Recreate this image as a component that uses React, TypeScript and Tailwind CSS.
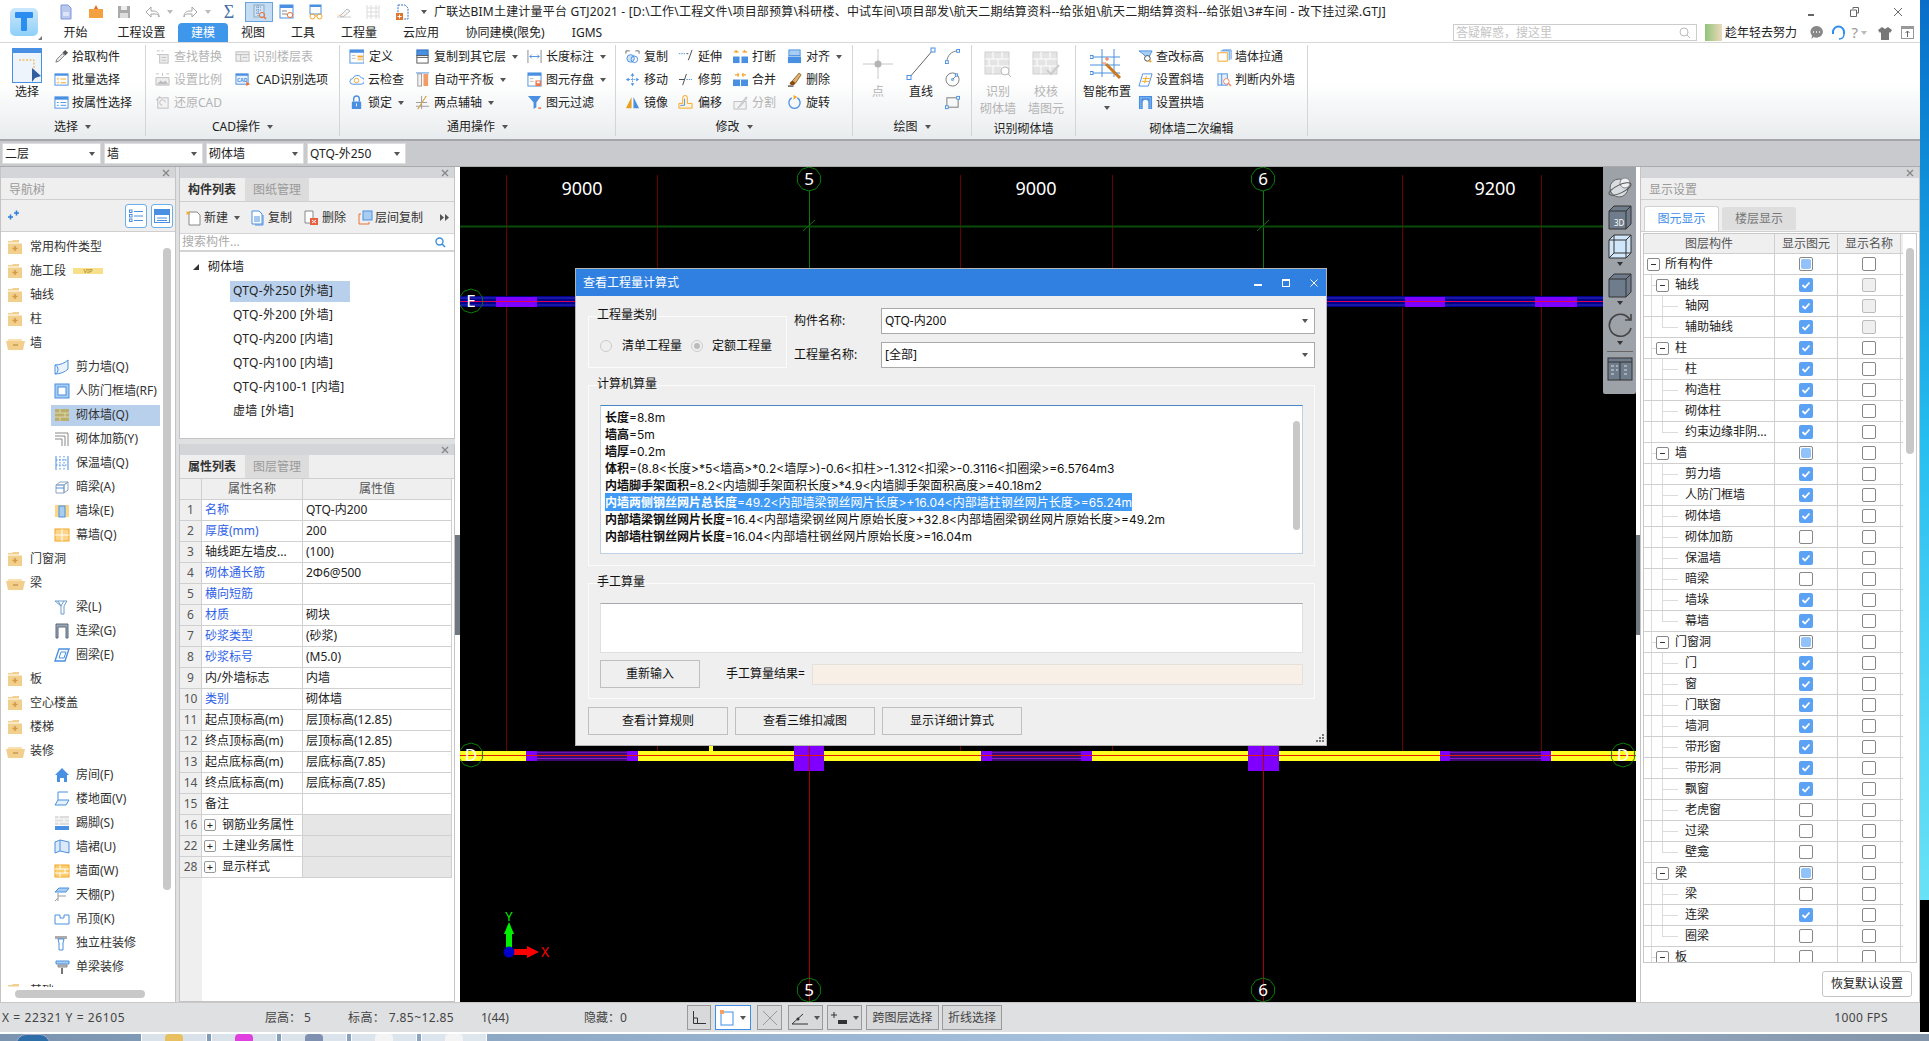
import React from "react";

const B = "#4a90e2", L = "#cfe3f8", O = "#f5a623", G = "#bdbdbd", D = "#666", K = "#444";

const icons: Record<string, React.ReactNode> = {
  pick: <><path d="M2 14l1-3 6-6 2 2-6 6z" fill="#eee" stroke="#777" /><path d="M9 4l3-3 3 3-3 3z" fill="#555" /></>,
  batch: <><rect x="1" y="2" width="14" height="12" fill="#fff" stroke={B} /><path d="M1 2h14v2H1z" fill={B} /><path d="M3 7l1 1 1-2M3 11l1 1 1-2M7 7.5h6M7 11.5h6" stroke={O} fill="none" /></>,
  prop: <><rect x="1" y="2" width="14" height="12" fill="#fff" stroke={B} /><path d="M1 2h14v3H1z" fill={B} /><path d="M3 8h2M7 8h6M3 11h2M7 11h6" stroke={B} /></>,
  find: <><path d="M2 2h3M7 2h2M2 6h3" stroke={G} /><rect x="5" y="6" width="9" height="9" fill="#eee" stroke={G} /><path d="M7 9h5M7 12h5" stroke={G} /></>,
  ftable: <><rect x="1" y="3" width="14" height="10" fill="#eee" stroke={G} /><path d="M1 6h14M6 6v7M8 9h5" stroke={G} /></>,
  scale: <><path d="M1 2h3M12 2h3M8 1v3" stroke={G} /><path d="M1 6h14v8H1z" fill="#eee" stroke={G} /><path d="M2 13l4-4 3 2 2-2 3 4z" fill={G} /></>,
  restore: <><rect x="3" y="3" width="11" height="11" fill="#f3f3f3" stroke={G} /><path d="M1 5h2M5 1v2M11 8a3 3 0 1 0-3 3" stroke={G} fill="none" /></>,
  cad: <><rect x="1" y="2" width="13" height="11" fill="#e6f0fb" stroke={B} /><path d="M1 2h13v2H1z" fill={B} /><text x="2" y="11" fontSize="5.5" fill={B} fontWeight="700">CAD</text><path d="M12 10l4 3-4 2z" fill="#f07030" /></>,
  def: <><rect x="1" y="1" width="15" height="14" fill="#fff" stroke={B} /><path d="M1 1h15v3H1z" fill={B} /><path d="M3 7h4M3 10h4" stroke={G} /><rect x="9" y="7" width="6" height="2" fill={O} /><rect x="9" y="10" width="6" height="2" fill="#f9c97a" /></>,
  cloud: <><path d="M4 13a3 3 0 0 1 0-6 5 5 0 0 1 9-1 3.5 3.5 0 0 1 0 7z" fill="#fff" stroke={B} /><circle cx="8" cy="9" r="2.4" fill="none" stroke={O} /></>,
  lock: <><path d="M5 7V4a3 3 0 0 1 6 0v3" fill="none" stroke={B} strokeWidth="1.5" /><rect x="3" y="7" width="10" height="8" rx="1" fill={B} /><rect x="7.5" y="9" width="1" height="3" fill="#fff" /></>,
  copyfl: <><rect x="2" y="1" width="12" height="6" fill={B} stroke="#2a6fb8" /><rect x="2" y="7" width="12" height="8" fill="#fff" stroke="#555" /><path d="M2 9h12" stroke="#555" /></>,
  align: <><path d="M1 1h14" stroke={B} /><rect x="3" y="2" width="4" height="13" fill="#f3f3f3" stroke="#999" /><rect x="9" y="2" width="5" height="13" fill="#f49a66" /></>,
  aux: <><path d="M1 12h14M1 8h12M7 1v14M12 1L3 15" stroke="#999" /><path d="M12 1L3 15" stroke={O} /></>,
  dim: <><path d="M1 1v14M15 1v14" stroke="#888" /><path d="M3 8h10M3 8l2-2M3 8l2 2M13 8l-2-2M13 8l-2 2" stroke={B} fill="none" /></>,
  save: <><rect x="1" y="1" width="14" height="14" fill="#fff" stroke={B} /><path d="M1 1h14v3H1z" fill={B} /><path d="M3 7h4M3 10h4" stroke={G} /><rect x="9" y="9" width="6" height="6" fill="#f07848" /><rect x="10.5" y="10" width="3" height="2" fill="#fff" /></>,
  filter: <><path d="M1 1h14L10 8v5l-3 2V8z" fill={B} /><path d="M12 14h3" stroke="#f07030" strokeWidth="1.5" /></>,
  copy: <><circle cx="6" cy="10" r="4" fill="#cfe3f8" stroke={B} /><path d="M1 2h4M1 2v3M11 2h4v3" stroke="#666" fill="none" /><circle cx="10" cy="11" r="3.5" fill="none" stroke={B} /></>,
  move: <><path d="M8 1l2 3H6zM8 15l2-3H6zM1 8l3-2v4zM15 8l-3-2v4z" fill={B} /><path d="M8 4v8M4 8h8" stroke={B} strokeDasharray="1.5 1" /></>,
  mirror: <><path d="M7 2v12H1z" fill="#e8a020" /><path d="M9 2v12h6z" fill={B} /></>,
  extend: <><path d="M1 5h7" stroke={B} strokeDasharray="1.5 1" /><path d="M9 5h2M11 12l4-11" stroke={K} /></>,
  trim: <><path d="M1 8h6" stroke={K} /><path d="M9 8h6" stroke={B} strokeDasharray="1.5 1" /><path d="M5 14l4-12" stroke={K} /></>,
  offset: <><path d="M1 14V9h4V3a2 2 0 0 1 5 0v6h5v5z" fill="#fff4dc" stroke={O} /><path d="M3 12v-1h4V4" fill="none" stroke={B} /></>,
  brk: <><rect x="0" y="8" width="7" height="7" fill={B} /><rect x="9" y="8" width="7" height="7" fill={B} /><path d="M3 1l1 3M1 3l5 0M12 1l1 3M10 3h5" stroke={O} strokeWidth="1.4" /></>,
  merge: <><rect x="0" y="8" width="16" height="7" fill={B} /><path d="M8 8v7" stroke="#fff" /><path d="M2 3h4M5 1l1 2-1 2M14 3h-4M11 1l-1 2 1 2" stroke={O} fill="none" strokeWidth="1.2" /></>,
  split: <><rect x="1" y="7" width="13" height="8" fill="#f3f3f3" stroke={G} /><path d="M5 14l3-4 6-8 1 1-6 8z" fill="#e2e2e2" stroke={G} /></>,
  alignr: <><rect x="2" y="1" width="12" height="6" fill="#a8cdf2" stroke={B} /><rect x="1" y="8" width="14" height="7" fill={B} /></>,
  del: <><path d="M1 15h6" stroke="#000" /><path d="M3 13c0-3 2-3 3-4l3 3c-1 2-3 3-6 1z" fill="#8a4a12" /><path d="M6 9l7-8 2 2-6 9z" fill="#e0b070" stroke="#8a6a30" /></>,
  rotate: <><path d="M5 3a6 6 0 1 0 6 0" fill="none" stroke={B} strokeWidth="1.4" /><path d="M7 0l4 2-4 3z" fill={O} /></>,
  arc: <><path d="M2 14C2 7 7 2 14 2" fill="none" stroke="#777" /><rect x="0.5" y="12.5" width="3" height="3" fill="#fff" stroke={B} /><rect x="12.5" y="0.5" width="3" height="3" fill="#fff" stroke={B} /></>,
  circ: <><circle cx="8" cy="8" r="7" fill="none" stroke="#777" /><circle cx="8" cy="8" r="1.2" fill="#fff" stroke={B} /><path d="M8 8l4-4" stroke="#777" /><rect x="11" y="2" width="2.4" height="2.4" fill="#fff" stroke={B} /></>,
  rect: <><rect x="2" y="3" width="12" height="10" fill="none" stroke="#777" /><rect x="0.5" y="11.5" width="3" height="3" fill="#fff" stroke={B} /><rect x="12.5" y="1.5" width="3" height="3" fill="#fff" stroke={B} /></>,
  height: <><path d="M1 2h14l-3 6H8L5 5z" fill="#a8cdf2" stroke={B} /><circle cx="10" cy="10" r="3" fill="#fff" stroke={K} /><path d="M12 12l2 2" stroke={O} strokeWidth="2" /></>,
  slant: <><path d="M5 2h10l-4 13H1z" fill="#fff" stroke={B} /><path d="M4 10h8M5 7h8M7 12l2-8" stroke={O} /></>,
  arch: <><path d="M1 15V1h14v14h-4V8a3 3 0 0 0-6 0v7z" fill={B} /><path d="M3 3v12M13 3v12M3 3h10" stroke="#cfe3f8" strokeDasharray="1 1" /></>,
  through: <><rect x="1" y="4" width="10" height="9" fill="#fff" stroke={O} /><path d="M4 2h9v10M6 1h9v10" fill="none" stroke={B} /></>,
  inout: <><rect x="1" y="2" width="10" height="12" fill="#e6f0fb" stroke={B} /><path d="M5 2v12" stroke={B} /><circle cx="10" cy="10" r="3" fill="#fff" stroke="#f08060" /><path d="M12 12l3 3" stroke="#f08060" strokeWidth="1.5" /></>,
  doc: <><path d="M3 1h7l3 3v11H3z" fill="#b9c9ee" stroke="#7f97d8" /><path d="M5 9h6M5 11h6" stroke="#fff" /></>,
  folder: <><path d="M1 5h14v9H1z" fill="#f2a040" /><path d="M6 5l2-4 2 4z" fill="#e8681c" /></>,
  disk: <><rect x="2" y="2" width="12" height="12" fill="#aaa" /><rect x="5" y="2" width="6" height="4" fill="#eee" /><rect x="4" y="9" width="8" height="5" fill="#ddd" /></>,
  undo: <path d="M6 3L1 8l5 5v-3h4c2 0 4 1 4 3 0-4-2-6-6-6H6z" fill="#fff" stroke="#a5a5a5" />,
  redo: <path d="M10 3l5 5-5 5v-3H6c-2 0-4 1-4 3 0-4 2-6 6-6h2z" fill="#fff" stroke="#a5a5a5" />,
  q1: <><rect x="3" y="1" width="10" height="12" fill="#cfe3f8" stroke="#8ab" /><path d="M5 3h6M5 6h6M5 9h3M7 1v11" stroke="#6a8ab0" strokeDasharray="1 1" /><circle cx="11" cy="11" r="2.6" fill="none" stroke="#f07030" /><path d="M13 13l2 2" stroke="#f07030" strokeWidth="1.5" /></>,
  q2: <><rect x="1" y="1" width="13" height="13" fill="#fff" stroke={B} /><path d="M1 1h13v3H1z" fill={B} /><path d="M3 7h5M3 10h5" stroke="#888" /><circle cx="11" cy="11" r="2.6" fill="#fff" stroke="#f07030" /></>,
  q3: <><rect x="2" y="1" width="11" height="9" fill="#fff" stroke={B} /><path d="M2 1h11v2H2z" fill={B} /><circle cx="4.5" cy="12.5" r="2.5" fill="none" stroke={O} /><circle cx="11.5" cy="12.5" r="2.5" fill="none" stroke={O} /><path d="M7 12h2" stroke={O} /></>,
  q4: <><path d="M1 13h14" stroke="#ccc" /><path d="M4 12l7-7 3 2-7 6z" fill="#f5f5f5" stroke={G} /><path d="M2 12l2-2 2 2z" fill="#f8c8a0" /></>,
  q5: <><path d="M2 1v14M6 1v14M11 1v14M14 1v14M2 4h12M2 8h12M2 12h12" stroke="#dcdcdc" /></>,
  q6: <><path d="M3 1h7l3 3v11H3z" fill="#fff" stroke="#3574c0" strokeDasharray="2 1" /><rect x="1" y="9" width="7" height="7" fill="#e0752c" /><path d="M4.5 10.5v4M2.5 12.5h4" stroke="#fff" /></>,
  tnew: <><path d="M3 2h8l3 3v10H3z" fill="#fff" stroke="#888" /><path d="M0 1l2 1 2-1-1 2 1 2-2-1-2 1 1-2z" fill={O} /></>,
  tcopy: <><path d="M2 1h7l3 3v10H2z" fill="#fff" stroke={B} /><path d="M4 7h6M4 9h6M4 11h6" stroke={B} /><path d="M13 5v10H5" stroke={B} fill="none" /></>,
  tdel: <><path d="M2 1h8v12H2z" fill="#fff" stroke="#888" /><rect x="7" y="8" width="8" height="7" fill="#e86040" /><path d="M9 10l4 3M13 10l-4 3" stroke="#fff" /></>,
  tfloor: <><rect x="6" y="1" width="9" height="9" fill="#a8cdf2" stroke={B} /><path d="M4 4H2v10h10v-2" fill="none" stroke="#e8732c" /></>,
  wallq: <><path d="M1 6c5 0 10-2 13-5v9c-3 3-8 5-13 5z" fill="#eaf3fc" stroke={B} /><path d="M1 6c4 1 4 8 0 9" stroke={B} fill="none" /></>,
  door: <><rect x="1" y="1" width="14" height="14" fill="#a8cdf2" stroke={B} /><rect x="4" y="4" width="8" height="8" fill="#fff" stroke={B} /></>,
  brick: <><rect x="1" y="2" width="14" height="12" fill="#b9ae6c" /><path d="M1 6h14M1 10h14M6 2v4M11 6v4M6 10v4" stroke="#dfd9ad" /></>,
  rebar: <><path d="M1 2h13v13M1 5h10v10M1 8h7v7" fill="none" stroke="#888" /></>,
  insul: <><path d="M2 1v14M14 1v14" stroke={B} /><path d="M6 1v14M10 1v14M2 5h12M2 10h12" stroke={B} strokeDasharray="1.5 1.5" /></>,
  hidden: <><path d="M2 6l4-3h8l-4 3zM2 6h8v8H2zM10 6l4-3v8l-4 3z" fill="#fff" stroke="#8aa4c4" /><path d="M2 9h8" stroke={B} /></>,
  pier: <><rect x="1" y="2" width="14" height="12" fill="#fbd784" /><rect x="5" y="3" width="6" height="11" fill="#a8cdf2" stroke={B} /></>,
  curtain: <><rect x="1" y="2" width="14" height="12" fill="#fcd58a" stroke={O} /><path d="M8 2v12M1 8h14" stroke="#fff" /></>,
  beam: <><path d="M1 2h12l-3 5v8H7V7z" fill="#fff" stroke="#6a9ccc" /><path d="M4 2l3 5M10 2L7 7" stroke="#6a9ccc" /></>,
  cbeam: <><path d="M2 1h12v14h-2V4H4v11H2z" fill="#9aa6b4" stroke="#5a6a7a" /></>,
  rbeam: <><path d="M5 2h10l-4 12H1z" fill="#fff" stroke={B} strokeWidth="1.4" /><path d="M7 5h5l-2 6H5z" fill="none" stroke={B} /></>,
  room: <><path d="M1 8l7-7 7 7h-2v7h-3v-4H6v4H3V8z" fill={B} /></>,
  floor: <><path d="M4 1v8M4 1h10M1 14l3-5h11l-3 5z" fill="#e6f0fb" stroke={B} /></>,
  skirt: <><rect x="1" y="1" width="14" height="9" fill="#ddd" /><path d="M1 4h14M1 7h14M5 1v3M10 4v3M5 7v3" stroke="#fff" /><rect x="1" y="11" width="14" height="4" fill={B} /></>,
  dado: <><path d="M1 3l5-2 9 2v11l-9-2-5 2z" fill="#dbe9f8" stroke={B} /><path d="M6 1v11" stroke={B} /></>,
  wface: <><rect x="1" y="2" width="14" height="12" fill="#fbcf70" stroke={O} /><path d="M1 6h14M1 10h14M6 2v4M11 6v4M6 10v4" stroke="#fff" /></>,
  ceil: <><path d="M5 1h10l-3 4H1z" fill="#a8cdf2" stroke={B} /><path d="M4 6v8M4 9h8M1 14l3-3" stroke="#999" fill="none" /></>,
  susp: <><path d="M1 4h5v3h4V4h5v9H1z" fill="#fff" stroke={B} /></>,
  col: <><path d="M1 1h12v3H1z" fill="#aaa" /><path d="M4 4l1 4v7h4V8l1-4z" fill="#fff" stroke={B} /></>,
  sbeam: <><path d="M2 2h13v3H2z" fill="#a8cdf2" stroke={B} /><path d="M4 6h9v2H4z" fill="#ccc" stroke="#888" /><path d="M8 9v6" stroke="#777" strokeWidth="2" /></>,
};

const Ic = ({ n, s = 16 }: { n: string; s?: number }) => (
  <svg width={s} height={s} viewBox="0 0 16 16" className="shrink-0">{icons[n]}</svg>
);

const Arrow = ({ c = "border-t-[#555]", ml = "ml-[6px]" }: { c?: string; ml?: string }) => (
  <span className={`inline-block w-0 h-0 border-x-[3px] border-x-transparent border-t-[4px] ${c} ${ml}`} />
);

const Close = () => (
  <svg width="8" height="8" viewBox="0 0 8 8"><path d="M1 1l6 6M7 1L1 7" stroke="#888" strokeWidth="1.4" /></svg>
);

const Item = ({ i, t, iw = "w-[19px]", off, arrow }: { i: string; t: string; iw?: string; off?: boolean; arrow?: boolean }) => (
  <div className={`flex items-center h-[23px] whitespace-nowrap ${off ? "text-[#b4b4b4]" : ""}`}>
    <span className={`${iw} shrink-0 flex`}><Ic n={i} s={15} /></span>
    <span>{t}</span>
    {arrow && <Arrow />}
  </div>
);

const GroupLabel = ({ t, arrow = true }: { t: string; arrow?: boolean }) => (
  <div className={`h-[19px] flex items-center justify-center ${arrow ? "" : "pt-[4px]"}`}>{t}{arrow && <Arrow ml="ml-[7px]" />}</div>
);

const Section = ({ w, label, arrow, children }: { w: string; label: string; arrow?: boolean; children: React.ReactNode }) => (
  <div className={`${w} h-[91px] flex flex-col shrink-0 border-r border-[#d3d6d9]`}>
    <div className="h-[72px] flex">{children}</div>
    <GroupLabel t={label} arrow={arrow} />
  </div>
);

const PANEL_RULES = [506, 657, 960, 1112, 1402, 1541];

const Ribbon = () => (
  <div className="h-[97px] pt-[2px] flex bg-gradient-to-b from-white from-40% to-[#e9ecee] border-t border-[#d8d8d8] text-[#222]">
    <Section w="w-[146px]" label="选择">
      <div className="w-[54px] flex flex-col items-center">
        <div className="h-[38px] pt-[3px]">
          <svg width="30" height="35" viewBox="0 0 30 35">
            <rect x="0.5" y="0.5" width="29" height="34" fill="#eef4fb" stroke="#4a90e2" />
            <rect x="0" y="0" width="30" height="5" fill="#4a90e2" />
            <path d="M7 12h15v16" stroke="#f5a623" strokeDasharray="2 1.5" fill="none" />
            <path d="M20 20l9 8-6 2-3 4z" fill="#2f5f9f" />
          </svg>
        </div>
        <div className="leading-[17px]">选择</div>
      </div>
      <div>
        <Item i="pick" t="拾取构件" iw="w-[18px]" />
        <Item i="batch" t="批量选择" iw="w-[18px]" />
        <Item i="prop" t="按属性选择" iw="w-[18px]" />
      </div>
    </Section>
    <Section w="w-[194px]" label="CAD操作">
      <div className="w-[89px] pl-[9px]">
        <Item i="find" t="查找替换" off />
        <Item i="scale" t="设置比例" off />
        <Item i="restore" t="还原CAD" off />
      </div>
      <div>
        <Item i="ftable" t="识别楼层表" iw="w-[18px]" off />
        <Item i="cad" t="CAD识别选项" iw="w-[21px]" />
      </div>
    </Section>
    <Section w="w-[276px]" label="通用操作">
      <div className="w-[75px] pl-[9px]">
        <Item i="def" t="定义" iw="w-[20px]" />
        <Item i="cloud" t="云检查" />
        <Item i="lock" t="锁定" arrow />
      </div>
      <div className="w-[112px]">
        <Item i="copyfl" t="复制到其它层" arrow />
        <Item i="align" t="自动平齐板" arrow />
        <Item i="aux" t="两点辅轴" arrow />
      </div>
      <div>
        <Item i="dim" t="长度标注" arrow />
        <Item i="save" t="图元存盘" arrow />
        <Item i="filter" t="图元过滤" />
      </div>
    </Section>
    <Section w="w-[237px]" label="修改">
      <div className="w-[62px] pl-[9px]">
        <Item i="copy" t="复制" />
        <Item i="move" t="移动" />
        <Item i="mirror" t="镜像" />
      </div>
      <div className="w-[55px]">
        <Item i="extend" t="延伸" iw="w-[20px]" />
        <Item i="trim" t="修剪" iw="w-[20px]" />
        <Item i="offset" t="偏移" iw="w-[20px]" />
      </div>
      <div className="w-[54px]">
        <Item i="brk" t="打断" />
        <Item i="merge" t="合并" />
        <Item i="split" t="分割" off />
      </div>
      <div>
        <Item i="alignr" t="对齐" arrow />
        <Item i="del" t="删除" />
        <Item i="rotate" t="旋转" />
      </div>
    </Section>
    <Section w="w-[119px]" label="绘图">
      <div className="w-[50px] flex flex-col items-center text-[#b4b4b4]">
        <div className="h-[38px] pt-[2px]">
          <svg width="30" height="34" viewBox="0 0 30 34"><path d="M0 17h30M15 2v30" stroke="#c8c8c8" /><circle cx="15" cy="17" r="3.5" fill="#b4b4b4" /></svg>
        </div>
        <div className="leading-[17px]">点</div>
      </div>
      <div className="w-[36px] flex flex-col items-center">
        <div className="h-[38px] pt-[2px]">
          <svg width="30" height="34" viewBox="0 0 30 34"><path d="M3 31L27 3" stroke="#666" /><rect x="1" y="28.5" width="4" height="4" fill="#fff" stroke="#4a90e2" /><rect x="25" y="1" width="4" height="4" fill="#fff" stroke="#4a90e2" /></svg>
        </div>
        <div className="leading-[17px]">直线</div>
      </div>
      <div className="ml-[6px]">
        <Item i="arc" t="" />
        <Item i="circ" t="" />
        <Item i="rect" t="" />
      </div>
    </Section>
    <Section w="w-[104px]" label="识别砌体墙" arrow={false}>
      <div className="w-[2px]" />
      <div className="w-[48px] flex flex-col items-center text-[#b4b4b4]">
        <div className="h-[38px] pt-[6px]">
          <svg width="28" height="28" viewBox="0 0 28 28"><rect x="1" y="1" width="24" height="22" fill="#e4e4e4" stroke="#cfcfcf" /><path d="M1 8h24M1 15h24M9 1v7M18 1v7M5 8v7M14 8v7M9 15v8M18 15v8" stroke="#fff" /><circle cx="21" cy="20" r="4" fill="#fff" stroke="#bbb" /><path d="M24 23l3 3" stroke="#bbb" /></svg>
        </div>
        <div className="leading-[17px] text-center">识别<br />砌体墙</div>
      </div>
      <div className="w-[48px] flex flex-col items-center text-[#b4b4b4]">
        <div className="h-[38px] pt-[6px]">
          <svg width="28" height="28" viewBox="0 0 28 28"><rect x="1" y="1" width="24" height="22" fill="#e4e4e4" stroke="#cfcfcf" /><path d="M1 8h24M1 15h24M9 1v7M18 1v7M5 8v7M14 8v7M9 15v8M18 15v8" stroke="#fff" /><path d="M15 19l4 4 8-9" stroke="#ccc" strokeWidth="2" fill="none" /></svg>
        </div>
        <div className="leading-[17px] text-center">校核<br />墙图元</div>
      </div>
    </Section>
    <Section w="w-[232px]" label="砌体墙二次编辑" arrow={false}>
      <div className="w-[6px]" />
      <div className="w-[50px] flex flex-col items-center">
        <div className="h-[38px] pt-[4px]">
          <svg width="34" height="32" viewBox="0 0 34 32">
            <path d="M12 0v28M24 0v28M0 8h30M0 16h30M0 24h30" stroke="#4a90e2" />
            <rect x="0" y="6.5" width="3" height="3" fill="#fff" stroke="#4a90e2" /><rect x="0" y="22.5" width="3" height="3" fill="#fff" stroke="#4a90e2" />
            <path d="M16 15l14 14" stroke="#c87a20" strokeWidth="3" /><path d="M17 8v4M15 10h4M12 14h4" stroke="#f07030" />
          </svg>
        </div>
        <div className="leading-[17px]">智能布置</div>
        <Arrow ml="mt-[6px]" />
      </div>
      <div className="w-[85px] pl-[6px]">
        <Item i="height" t="查改标高" iw="w-[18px]" />
        <Item i="slant" t="设置斜墙" iw="w-[18px]" />
        <Item i="arch" t="设置拱墙" iw="w-[18px]" />
      </div>
      <div>
        <Item i="through" t="墙体拉通" iw="w-[18px]" />
        <Item i="inout" t="判断内外墙" iw="w-[18px]" />
      </div>
    </Section>
    <div className="flex-1" />
  </div>
);

const Header = () => (
  <div className="h-[42px] flex bg-white">
    <div className="w-[46px] shrink-0 relative pl-[10px] pt-[8px]">
      <div className="w-[28px] h-[28px] rounded-[5px] bg-gradient-to-b from-[#cbe7fb] to-[#8fd0f8] flex justify-center">
        <svg width="22" height="26" viewBox="0 0 22 26"><path d="M3 5h16v4h-6v13h-4V9H3z" fill="#2c8df0" strokeLinejoin="round" stroke="#2c8df0" strokeWidth="2" /></svg>
      </div>
      <span className="absolute left-[38px] top-[36px] w-0 h-0 border-l-[4px] border-l-transparent border-b-[4px] border-b-[#777]" />
    </div>
    <div className="flex-1 flex flex-col">
      <div className="h-[23px] flex items-center">
        <span className="ml-[12px]"><Ic n="doc" /></span>
        <span className="ml-[14px]"><Ic n="folder" /></span>
        <span className="ml-[12px]"><Ic n="disk" /></span>
        <span className="ml-[13px]"><Ic n="undo" /></span>
        <Arrow c="border-t-[#bbb]" />
        <span className="ml-[9px]"><Ic n="redo" /></span>
        <Arrow c="border-t-[#bbb]" ml="ml-[7px]" />
        <span className="ml-[10px] w-[16px] text-center text-[18px] leading-[20px] text-[#4a6fa5] font-['Liberation_Serif',serif]">Σ</span>
        <span className="ml-[8px] w-[28px] h-[20px] flex items-center justify-center bg-[#c4dcf4] border border-[#6aa4dc]"><Ic n="q1" /></span>
        <span className="ml-[6px]"><Ic n="q2" /></span>
        <span className="ml-[13px]"><Ic n="q3" /></span>
        <span className="ml-[12px]"><Ic n="q4" /></span>
        <span className="ml-[13px]"><Ic n="q5" /></span>
        <span className="ml-[14px]"><Ic n="q6" /></span>
        <Arrow ml="ml-[10px]" />
        <span className="ml-[7px] whitespace-nowrap tracking-[0.2px]">广联达BIM土建计量平台 GTJ2021 - [D:\工作\工程文件\项目部预算\科研楼、中试车间\项目部发\航天二期结算资料--给张姐\航天二期结算资料--给张姐\3#车间 - 改下挂过梁.GTJ]</span>
        <div className="ml-auto flex items-center pr-[17px]">
          <span className="w-[6px] h-[2px] bg-[#666] mt-[6px]" />
          <svg className="ml-[36px]" width="9" height="10" viewBox="0 0 9 10"><path d="M3 2V.5h5.5V6H7M.5 3h6v6.500h-6z" fill="none" stroke="#666" /></svg>
          <svg className="ml-[34px]" width="10" height="10" viewBox="0 0 10 10"><path d="M1 1l8 8M9 1L1 9" stroke="#666" /></svg>
        </div>
      </div>
      <div className="h-[19px] flex items-center text-center">
        <div className="w-[59px]">开始</div>
        <div className="w-[73px]">工程设置</div>
        <div className="w-[50px] h-[19px] leading-[19px] bg-[#3f97eb] text-white rounded-t-[4px]">建模</div>
        <div className="w-[50px]">视图</div>
        <div className="w-[50px]">工具</div>
        <div className="w-[62px]">工程量</div>
        <div className="w-[62px]">云应用</div>
        <div className="w-[106px]">协同建模(限免)</div>
        <div className="w-[58px]">IGMS</div>
        <div className="ml-auto w-[467px] flex items-center pr-[6px]">
          <div className="w-[244px] h-[17px] border border-[#ccc] flex items-center justify-between px-[2px] text-[#c4c4c4]">
            <span>答疑解惑，搜这里</span>
            <svg width="12" height="12" viewBox="0 0 12 12" className="mr-[3px]"><circle cx="5" cy="5" r="4" fill="none" stroke="#bbb" /><path d="M8 8l3 3" stroke="#bbb" /></svg>
          </div>
          <div className="ml-[8px] w-[17px] h-[17px] bg-gradient-to-r from-[#8fc47a] to-[#ecd9bb]" />
          <span className="ml-[3px] whitespace-nowrap">趁年轻去努力</span>
          <span className="ml-auto flex items-center gap-[5px]">
            <svg width="15" height="15" viewBox="0 0 15 15"><path d="M7.500 1a6.500 5.800 0 1 1-3 11l-2 2 .5-3.500a6.500 5.800 0 0 1 4.500-9.500z" fill="#888" /><path d="M4 7h1M7 7h1M10 7h1" stroke="#fff" strokeWidth="1.4" /></svg>
            <svg width="15" height="16" viewBox="0 0 15 16" className="ml-[2px]"><path d="M2 9V7a5.500 5.500 0 0 1 11 0v2" fill="none" stroke="#2f8df0" strokeWidth="2" /><path d="M13 9c0 3-2 5-5 5" fill="none" stroke="#2f8df0" strokeWidth="1.4" /></svg>
            <span className="text-[15px] leading-[15px] text-[#999]">?</span>
            <Arrow c="border-t-[#bbb]" ml="ml-[-2px]" />
            <svg width="14" height="14" viewBox="0 0 14 14" className="ml-[6px]"><path d="M4 1L0 4l2 3 1-1v8h8V6l1 1 2-3-4-3-3 2z" fill="#777" /></svg>
            <svg width="13" height="13" viewBox="0 0 13 13" className="ml-[4px]"><rect x=".5" y=".5" width="12" height="12" fill="#fff" stroke="#999" /><path d="M0 0h13v3H0z" fill="#999" /><path d="M6.500 5v6M4.500 7l2-2 2 2" fill="none" stroke="#666" /></svg>
          </span>
        </div>
      </div>
    </div>
  </div>
);

const Sel = ({ w, t }: { w: string; t: string }) => (
  <div className={`${w} h-[21px] bg-white border border-[#ddd] flex items-center justify-between pl-[2px] pr-[5px]`}>
    <span>{t}</span><Arrow />
  </div>
);

const Folder = ({ open }: { open?: boolean }) => (
  <svg width="20" height="16" viewBox="0 0 20 16" className="shrink-0">
    {open ? (
      <><path d="M2 4h14v4H2z" fill="#f8e0b0" /><path d="M0 6h19l-2 9H2z" fill="#f3cf8d" /><path d="M7 10h5" stroke="#c89a50" strokeWidth="1.5" /></>
    ) : (
      <><path d="M2 2h4l1-1h6v3h3v11H2z" fill="#f3cf8d" /><path d="M2 4h14" stroke="#fff" /><path d="M9 7v5M6.500 9.500h5" stroke="#cf9a45" strokeWidth="1.5" /></>
    )}
  </svg>
);

const NAV: [number, string, string?][] = [
  [0, "常用构件类型"], [0, "施工段", "vip"], [0, "轴线"], [0, "柱"], [2, "墙"],
  [1, "剪力墙(Q)", "wallq"], [1, "人防门框墙(RF)", "door"], [1, "砌体墙(Q)", "brick"], [1, "砌体加筋(Y)", "rebar"], [1, "保温墙(Q)", "insul"], [1, "暗梁(A)", "hidden"], [1, "墙垛(E)", "pier"], [1, "幕墙(Q)", "curtain"],
  [0, "门窗洞"], [2, "梁"], [1, "梁(L)", "beam"], [1, "连梁(G)", "cbeam"], [1, "圈梁(E)", "rbeam"],
  [0, "板"], [0, "空心楼盖"], [0, "楼梯"], [2, "装修"],
  [1, "房间(F)", "room"], [1, "楼地面(V)", "floor"], [1, "踢脚(S)", "skirt"], [1, "墙裙(U)", "dado"], [1, "墙面(W)", "wface"], [1, "天棚(P)", "ceil"], [1, "吊顶(K)", "susp"], [1, "独立柱装修", "col"], [1, "单梁装修", "sbeam"], [0, "基础"],
];

const Band = () => (
  <div className="h-[11px] shrink-0 bg-[#d3d5d8] flex items-center justify-end pr-[5px]"><Close /></div>
);

const LeftPanel = () => (
  <div className="w-[176px] shrink-0 flex flex-col bg-white border-x border-[#c4c4c4] relative">
    <Band />
    <div className="h-[22px] shrink-0 bg-[#efefef] border-b border-[#cfcfcf] flex items-center pl-[8px] pt-[2px] text-[#9a9a9a]">导航树</div>
    <div className="h-[32px] shrink-0 bg-[#efefef] border-b border-[#cfcfcf] flex items-center pl-[6px] pr-[2px] justify-between">
      <svg width="13" height="11" viewBox="0 0 13 11"><path d="M1 7h5M3.500 4.500v5M7 3h5M9.500 .5v5" stroke="#2f7fe0" strokeWidth="1.6" /></svg>
      <div className="flex gap-[4px]">
        <div className="w-[22px] h-[24px] bg-white border border-[#6aaeea] rounded-[3px] flex items-center justify-center">
          <svg width="14" height="14" viewBox="0 0 14 14"><path d="M5 2.500h9M5 7h9M5 11.500h9" stroke="#4a90e2" /><rect x=".5" y="1" width="2.500" height="2.500" fill="none" stroke="#4a90e2" /><rect x=".5" y="5.500" width="2.500" height="2.500" fill="none" stroke="#4a90e2" /><rect x=".5" y="10" width="2.500" height="2.500" fill="none" stroke="#4a90e2" /></svg>
        </div>
        <div className="w-[22px] h-[24px] bg-white border border-[#6aaeea] rounded-[3px] flex items-center justify-center">
          <svg width="16" height="14" viewBox="0 0 16 14"><rect x=".5" y=".5" width="15" height="13" fill="#fff" stroke="#4a90e2" /><rect x="1" y="1" width="14" height="5" fill="#4a90e2" /><path d="M3 9h10M3 11.500h10" stroke="#4a90e2" /></svg>
        </div>
      </div>
    </div>
    <div className="h-[755px] overflow-hidden pt-[3px] text-[#333]">
      {NAV.map(([k, t, e]) =>
        k === 1 ? (
          <div key={t} className="h-[24px] flex items-center pl-[50px]">
            <div className={`w-[109px] h-[21px] flex items-center pl-[3px] whitespace-nowrap ${t === "砌体墙(Q)" ? "bg-[#b8d0ec]" : ""}`}>
              <span className="w-[22px] shrink-0"><Ic n={e as string} /></span>{t}
            </div>
          </div>
        ) : (
          <div key={t} className="h-[24px] flex items-center pl-[5px]">
            <span className="w-[24px] shrink-0"><Folder open={k === 2} /></span>
            {t}
            {e === "vip" && <span className="ml-[7px] w-[30px] h-[6px] bg-[#f8e08a] text-[6px] leading-[6px] text-center text-[#9a7a10]">VIP</span>}
          </div>
        )
      )}
    </div>
    <div className="h-[13px] bg-white pl-[14px] pt-[3px]"><div className="w-[130px] h-[8px] rounded-full bg-[#c8c8c8]" /></div>
    <div className="absolute left-[162px] top-[81px] w-[8px] h-[642px] rounded-full bg-[#c8c8c8]" />
  </div>
);

const Tab = ({ t, on, w }: { t: string; on?: boolean; w: string }) => (
  <div className={`${w} h-[23px] flex items-center justify-center ${on ? "bg-[#efefef] font-semibold text-[#333]" : "bg-[#dcdcdc] text-[#9a9a9a] ml-px"}`}>{t}</div>
);

const COMP = ["QTQ-外250 [外墙]", "QTQ-外200 [外墙]", "QTQ-内200 [内墙]", "QTQ-内100 [内墙]", "QTQ-内100-1 [内墙]", "虚墙 [外墙]"];

const PROPS: [string, string, string, boolean][] = [
  ["1", "名称", "QTQ-内200", true], ["2", "厚度(mm)", "200", true], ["3", "轴线距左墙皮...", "(100)", false], ["4", "砌体通长筋", "2Φ6@500", true], ["5", "横向短筋", "", true],
  ["6", "材质", "砌块", true], ["7", "砂浆类型", "(砂浆)", true], ["8", "砂浆标号", "(M5.0)", true], ["9", "内/外墙标志", "内墙", false], ["10", "类别", "砌体墙", true],
  ["11", "起点顶标高(m)", "层顶标高(12.85)", false], ["12", "终点顶标高(m)", "层顶标高(12.85)", false], ["13", "起点底标高(m)", "层底标高(7.85)", false], ["14", "终点底标高(m)", "层底标高(7.85)", false], ["15", "备注", "", false],
];

const Plus = () => (
  <span className="w-[12px] h-[12px] border border-[#999] rounded-[2px] mr-[6px] flex items-center justify-center text-[11px] leading-[10px]">+</span>
);

const MidPanel = () => (
  <div className="w-[276px] shrink-0 flex flex-col gap-[5px] ml-[3px]">
    <div className="h-[272px] flex flex-col bg-white border border-[#c4c4c4] border-t-0">
      <Band />
      <div className="h-[24px] flex bg-[#efefef] border-b border-[#cfcfcf]">
        <Tab t="构件列表" on w="w-[64px]" /><Tab t="图纸管理" w="w-[64px]" />
      </div>
      <div className="h-[31px] bg-[#efefef] flex items-center text-[#333] relative">
        <span className="ml-[6px] w-[18px]"><Ic n="tnew" /></span>新建<Arrow />
        <span className="ml-[10px] w-[18px]"><Ic n="tcopy" /></span>复制
        <span className="ml-[11px] w-[19px]"><Ic n="tdel" /></span>删除
        <span className="ml-[11px] w-[18px]"><Ic n="tfloor" /></span>层间复制
        <svg className="absolute right-[5px] top-[12px]" width="9" height="7" viewBox="0 0 9 7"><path d="M0 0l4 3.500L0 7zM5 0l4 3.500L5 7z" fill="#555" /></svg>
      </div>
      <div className="h-[19px] flex items-center justify-between pl-[2px] pr-[8px] text-[#aaa] border-b-2 border-t border-[#d4d4d4]">
        <span>搜索构件...</span>
        <svg width="11" height="11" viewBox="0 0 11 11"><circle cx="4.500" cy="4.500" r="3.500" fill="none" stroke="#3f8fe0" strokeWidth="1.4" /><path d="M7 7l3 3" stroke="#3f8fe0" strokeWidth="1.6" /></svg>
      </div>
      <div className="pt-[3px] text-[#222]">
        <div className="h-[24px] flex items-center pl-[12px]">
          <span className="w-0 h-0 border-l-[6px] border-l-transparent border-b-[6px] border-b-[#333] mr-[9px] ml-[1px]" />砌体墙
        </div>
        {COMP.map((c, i) => (
          <div key={c} className="h-[24px] flex items-center pl-[50px]">
            <div className={`w-[120px] h-[21px] flex items-center pl-[3px] whitespace-nowrap tracking-[0.3px] ${i === 0 ? "bg-[#b8d0ec]" : ""}`}>{c}</div>
          </div>
        ))}
      </div>
    </div>
    <div className="flex-1 flex flex-col bg-white border border-[#c4c4c4] border-t-0">
      <Band />
      <div className="h-[24px] flex bg-[#efefef] border-b border-[#cfcfcf]">
        <Tab t="属性列表" on w="w-[64px]" /><Tab t="图层管理" w="w-[64px]" />
      </div>
      <div className="flex-1 flex flex-col text-[#222] w-[272px]">
        <div className="h-[21px] flex bg-[#efefef] border-b border-[#d0d0d0] text-[#555] shrink-0">
          <div className="w-[22px] border-r border-[#d0d0d0]" />
          <div className="w-[101px] border-r border-[#d0d0d0] flex items-center justify-center">属性名称</div>
          <div className="flex-1 border-r border-[#d0d0d0] flex items-center justify-center">属性值</div>
        </div>
        {PROPS.map(([n, a, v, blue]) => (
          <div key={n} className="h-[21px] flex border-b border-[#d0d0d0] shrink-0">
            <div className="w-[22px] bg-[#efefef] border-r border-[#d0d0d0] flex items-center justify-center text-[#555]">{n}</div>
            <div className={`w-[101px] border-r border-[#d0d0d0] flex items-center pl-[3px] whitespace-nowrap ${blue ? "text-[#2f62e8]" : ""}`}>{a}</div>
            <div className="flex-1 border-r border-[#d0d0d0] flex items-center pl-[3px] whitespace-nowrap">{v}</div>
          </div>
        ))}
        {[["16", "钢筋业务属性"], ["22", "土建业务属性"], ["28", "显示样式"]].map(([n, a]) => (
          <div key={n} className="h-[21px] flex border-b border-[#d0d0d0] shrink-0">
            <div className="w-[22px] bg-[#efefef] border-r border-[#d0d0d0] flex items-center justify-center text-[#555]">{n}</div>
            <div className="w-[101px] border-r border-[#d0d0d0] flex items-center pl-[2px] whitespace-nowrap"><Plus />{a}</div>
            <div className="flex-1 bg-[#e6e6e6] border-r border-[#d0d0d0]" />
          </div>
        ))}
        <div className="flex-1 flex"><div className="w-[22px] bg-[#efefef]" /></div>
      </div>
    </div>
  </div>
);

const Splitter = ({ w }: { w: string }) => (
  <div className={`${w} shrink-0 bg-white flex flex-col`}>
    <div className="h-[368px]" /><div className="h-[100px] bg-[#6f7780]" />
  </div>
);

const Bubble = ({ x, y, t }: { x: number; y: number; t: string }) => {
  const pts = Array.from({ length: 10 }, (_, i) => {
    const a = (i * Math.PI) / 5 + Math.PI / 10;
    return `${x + 12 * Math.cos(a)},${y + 12 * Math.sin(a)}`;
  }).join(" ");
  return (
    <g>
      <polygon points={pts} fill="none" stroke="#0a7a0a" />
      <text x={x} y={y + 6} fontSize="17" fill="#fff" textAnchor="middle">{t}</text>
    </g>
  );
};

const WIN: [number, number, number, number][] = [[526, 537, 627, 638], [981, 992, 1081, 1092], [1440, 1450, 1541, 1551]];

const Drawing = () => (
  <svg className="absolute inset-0" width="1176" height="835" viewBox="460 167 1176 835">
    <rect x="460" y="167" width="1176" height="835" fill="#000" />
    {PANEL_RULES.map((x) => <path key={x} d={`M${x + 0.5} 175V755`} stroke="#6a0000" />)}
    <path d="M809.500 191V746M1263.500 191V746" stroke="#0a7a0a" />
    <path d="M460 226.500H1636" stroke="#0a4a0a" strokeWidth="2" />
    <path d="M803 231l12-11M1257 231l12-11" stroke="#0a7a0a" />
    <rect x="460" y="296" width="1176" height="11" fill="#00008a" />
    <path d="M460 298H1636M460 305H1636" stroke="#3030c0" />
    {[[496, 537], [1405, 1445], [1535, 1577]].map(([a, b]) => <rect key={a} x={a} y="297" width={b - a} height="10" fill="#8000ff" />)}
    <path d="M460 301.500H1636" stroke="#e00050" />
    {[582, 1036, 1495].map((x, i) => <text key={x} x={x} y="195" fontSize="18" fill="#fff" textAnchor="middle">{["9000", "9000", "9200"][i]}</text>)}
    <Bubble x={809} y={179} t="5" />
    <Bubble x={1263} y={179} t="6" />
    <Bubble x={471} y={301} t="E" />
    <rect x="460" y="751" width="1176" height="10" fill="#ffff20" />
    <rect x="709" y="745" width="4" height="6" fill="#ffff20" />
    {WIN.map(([a, b, c, d]) => (
      <g key={a}>
        <rect x={a} y="751" width={b - a} height="10" fill="#8000ff" />
        <rect x={b} y="751" width={c - b} height="10" fill="#3a0a70" />
        <path d={`M${b} 758.500H${c}`} stroke="#8a1ad0" />
        <path d={`M${b} 752.500H${c}`} stroke="#6a10b0" />
        <rect x={c} y="751" width={d - c} height="10" fill="#8000ff" />
      </g>
    ))}
    <rect x="794" y="746" width="30" height="25" fill="#8000ff" />
    <rect x="1248" y="746" width="31" height="25" fill="#8000ff" />
    <path d="M460 755.500H1636" stroke="#e02000" />
    <path d="M809.500 746V1002M1263.500 746V1002" stroke="#a80000" />
    <Bubble x={471} y={755} t="D" />
    <Bubble x={1623} y={755} t="D" />
    <Bubble x={809} y={990} t="5" />
    <Bubble x={1263} y={990} t="6" />
    <path d="M509 952V930" stroke="#00ee00" strokeWidth="6" />
    <path d="M504 934l5-12 5 12z" fill="#00ee00" />
    <path d="M509 952h22" stroke="#f00" strokeWidth="6" />
    <path d="M527 946l12 6-12 6z" fill="#f00" />
    <circle cx="509" cy="952" r="5.500" fill="#0000c8" />
    <text x="509" y="921" fontSize="13" fill="#00ee00" textAnchor="middle">Y</text>
    <text x="545" y="957" fontSize="14" fill="#f00" textAnchor="middle">X</text>
  </svg>
);

const Legend = ({ t }: { t: string }) => (
  <span className="absolute left-[8px] top-[-10px] bg-[#efefef] leading-[16px]">{t}</span>
);

const GBox = ({ t, cn, children }: { t: string; cn: string; children?: React.ReactNode }) => (
  <div className={`relative border border-[#fbfbfb] ${cn}`}><Legend t={t} />{children}</div>
);

const DBtn = ({ t, w }: { t: string; w: string }) => (
  <div className={`${w} h-[28px] border border-[#bfbfbf] flex items-center justify-center`}>{t}</div>
);

const DSel = ({ t }: { t: string }) => (
  <div className="flex-1 h-[26px] bg-white border border-[#a9a9a9] flex items-center justify-between pl-[3px] pr-[6px]">
    <span>{t}</span><Arrow />
  </div>
);

const CALC: [string, string][] = [
  ["长度", "=8.8m"],
  ["墙高", "=5m"],
  ["墙厚", "=0.2m"],
  ["体积", "=(8.8<长度>*5<墙高>*0.2<墙厚>)-0.6<扣柱>-1.312<扣梁>-0.3116<扣圈梁>=6.5764m3"],
  ["内墙脚手架面积", "=8.2<内墙脚手架面积长度>*4.9<内墙脚手架面积高度>=40.18m2"],
  ["内墙两侧钢丝网片总长度", "=49.2<内部墙梁钢丝网片长度>+16.04<内部墙柱钢丝网片长度>=65.24m"],
  ["内部墙梁钢丝网片长度", "=16.4<内部墙梁钢丝网片原始长度>+32.8<内部墙圈梁钢丝网片原始长度>=49.2m"],
  ["内部墙柱钢丝网片长度", "=16.04<内部墙柱钢丝网片原始长度>=16.04m"],
];

const Dialog = () => (
  <div className="absolute left-[115px] top-[101px] w-[752px] h-[478px] bg-[#efefef] border border-[#b4b4b4] text-[#111] flex flex-col">
    <div className="h-[27px] shrink-0 bg-[#2f80e0] text-white flex items-center pl-[7px] pr-[8px]">
      <span>查看工程量计算式</span>
      <span className="ml-auto w-[8px] h-[2px] bg-white mt-[5px]" />
      <span className="ml-[20px] w-[8px] h-[8px] border border-white border-t-2" />
      <svg className="ml-[20px]" width="8" height="8" viewBox="0 0 8 8"><path d="M.5.5l7 7M7.500.5l-7 7" stroke="#fff" /></svg>
    </div>
    <div className="flex-1 pl-[12px] pr-[11px] pt-[12px]">
      <div className="flex h-[60px]">
        <GBox t="工程量类别" cn="w-[199px] h-[52px] mt-[8px] shrink-0">
          <div className="flex items-center h-full pt-[8px] pl-[11px]">
            <span className="w-[12px] h-[12px] rounded-full border border-[#ccc]" />
            <span className="ml-[10px]">清单工程量</span>
            <span className="ml-[9px] w-[12px] h-[12px] rounded-full border border-[#ccc] flex items-center justify-center"><span className="w-[6px] h-[6px] rounded-full bg-[#bbb]" /></span>
            <span className="ml-[9px]">定额工程量</span>
          </div>
        </GBox>
        <div className="flex-1 ml-[7px] flex flex-col gap-[8px]">
          <div className="flex items-center"><span className="w-[87px] shrink-0">构件名称:</span><DSel t="QTQ-内200" /></div>
          <div className="flex items-center"><span className="w-[87px] shrink-0">工程量名称:</span><DSel t="[全部]" /></div>
        </div>
      </div>
      <GBox t="计算机算量" cn="mt-[17px] h-[181px] pt-[19px] px-[11px]">
        <div className="relative h-[149px] bg-white border border-[#bcd2e4] border-t-[#4a86c0] pt-[2px] pl-[4px] leading-[17px] whitespace-nowrap font-['Inter','Noto_Sans_CJK_SC',sans-serif]">
          {CALC.map(([a, b], i) => (
            <div key={a} className="h-[17px]">
              <span className={i === 5 ? "inline-block bg-[#3f9bf5] text-white" : ""}>
                <span className="font-semibold font-['Noto_Sans_CJK_SC',sans-serif]">{a}</span>{b}
              </span>
            </div>
          ))}
          <div className="absolute left-[692px] top-[15px] w-[7px] h-[109px] rounded-full bg-[#c8c8c8]" />
        </div>
      </GBox>
      <GBox t="手工算量" cn="mt-[17px] h-[116px] pt-[19px] px-[11px]">
        <div className="h-[50px] bg-white border border-[#e0e0e0] border-t-[#a8a8b0]" />
        <div className="flex items-center mt-[7px]">
          <DBtn t="重新输入" w="w-[100px]" />
          <span className="ml-[26px] whitespace-nowrap">手工算量结果=</span>
          <div className="ml-[7px] flex-1 h-[21px] bg-[#f8efe6] border border-[#e4e0dc]" />
        </div>
      </GBox>
      <div className="flex gap-[7px] mt-[8px]">
        <DBtn t="查看计算规则" w="w-[140px]" />
        <DBtn t="查看三维扣减图" w="w-[140px]" />
        <DBtn t="显示详细计算式" w="w-[140px]" />
      </div>
    </div>
    <svg className="absolute right-[2px] bottom-[2px]" width="9" height="9" viewBox="0 0 9 9"><path d="M7 0h2v2H7zM4 3h2v2H4zM7 3h2v2H7zM1 6h2v2H1zM4 6h2v2H4zM7 6h2v2H7z" fill="#777" /></svg>
  </div>
);

const FloatBar = () => (
  <div className="absolute right-0 top-0 w-[33px] h-[227px] bg-[#9da1a8] rounded-b-[2px] flex flex-col items-center pt-[8px]">
    <svg width="26" height="26" viewBox="0 0 26 26"><circle cx="12" cy="13" r="9" fill="#d8dde2" stroke="#666" /><circle cx="18" cy="8" r="5" fill="#eef1f3" stroke="#888" /><ellipse cx="13" cy="14" rx="12" ry="4" fill="none" stroke="#555" transform="rotate(-25 13 14)" /></svg>
    <svg className="mt-[3px]" width="26" height="26" viewBox="0 0 26 26"><path d="M2 7l5-5h17v18l-5 5H2z" fill="#6f7c8c" stroke="#333" /><path d="M2 7h17v18M19 7l5-5" stroke="#333" fill="none" /><text x="7" y="22" fontSize="8" fill="#fff">3D</text></svg>
    <svg className="mt-[3px]" width="26" height="26" viewBox="0 0 26 26"><path d="M2 7l5-5h17v18l-5 5H2z" fill="#d0e6fb" stroke="#333" /><path d="M2 7h17v18M19 7l5-5M7 2v18h17M7 20l-5 5" stroke="#333" fill="none" /></svg>
    <Arrow ml="mt-[3px]" c="border-t-[#333]" />
    <svg className="mt-[6px]" width="26" height="26" viewBox="0 0 26 26"><path d="M2 7l5-5h17v18l-5 5H2z" fill="#6f7c8c" stroke="#333" /><path d="M2 7h17v18M19 7l5-5" stroke="#333" fill="none" /></svg>
    <Arrow ml="mt-[3px]" c="border-t-[#333]" />
    <svg className="mt-[6px]" width="26" height="26" viewBox="0 0 26 26"><path d="M23 9A11 11 0 1 0 24 17" fill="none" stroke="#444" strokeWidth="1.6" /><path d="M18 9h6V3" fill="none" stroke="#444" strokeWidth="1.6" /></svg>
    <Arrow ml="mt-[4px]" c="border-t-[#333]" />
    <div className="w-[26px] h-px bg-[#666] mt-[6px]" />
    <svg className="mt-[5px]" width="26" height="24" viewBox="0 0 26 24"><rect x="1" y="1" width="24" height="22" fill="#6f7c8c" stroke="#333" /><path d="M1 5h24M13 5v18" stroke="#333" /><path d="M4 9h3M4 13h3M4 17h3M9 9h2M9 13h2M17 9h3M17 13h3M17 17h3" stroke="#ddd" /></svg>
  </div>
);

type Chk = "c" | "u" | "m" | "d";
const RIGHT: [number, string, Chk, Chk, boolean?][] = [
  [0, "所有构件", "m", "u"], [1, "轴线", "c", "d"], [2, "轴网", "c", "d"], [2, "辅助轴线", "c", "d", true],
  [1, "柱", "c", "u"], [2, "柱", "c", "u"], [2, "构造柱", "c", "u"], [2, "砌体柱", "c", "u"], [2, "约束边缘非阴...", "c", "u", true],
  [1, "墙", "m", "u"], [2, "剪力墙", "c", "u"], [2, "人防门框墙", "c", "u"], [2, "砌体墙", "c", "u"], [2, "砌体加筋", "u", "u"], [2, "保温墙", "c", "u"], [2, "暗梁", "u", "u"], [2, "墙垛", "c", "u"], [2, "幕墙", "c", "u", true],
  [1, "门窗洞", "m", "u"], [2, "门", "c", "u"], [2, "窗", "c", "u"], [2, "门联窗", "c", "u"], [2, "墙洞", "c", "u"], [2, "带形窗", "c", "u"], [2, "带形洞", "c", "u"], [2, "飘窗", "c", "u"], [2, "老虎窗", "u", "u"], [2, "过梁", "u", "u"], [2, "壁龛", "u", "u", true],
  [1, "梁", "m", "u"], [2, "梁", "u", "u"], [2, "连梁", "c", "u"], [2, "圈梁", "u", "u", true], [1, "板", "u", "u"],
];

const Box = ({ k }: { k: Chk }) => {
  if (k === "c")
    return (
      <span className="w-[14px] h-[14px] rounded-[2px] bg-[#5ba2f4] flex items-center justify-center">
        <svg width="10" height="10" viewBox="0 0 10 10"><path d="M1.500 5l2.500 2.500L8.500 2.500" fill="none" stroke="#fff" strokeWidth="1.8" /></svg>
      </span>
    );
  if (k === "m")
    return (
      <span className="w-[14px] h-[14px] rounded-[2px] border border-[#888] flex items-center justify-center">
        <span className="w-[10px] h-[10px] rounded-[2px] bg-[#92c2fa]" />
      </span>
    );
  return <span className={`w-[14px] h-[14px] rounded-[2px] border ${k === "d" ? "border-[#bbb] bg-[#efefef]" : "border-[#888] bg-white"}`} />;
};

const Minus = () => (
  <span className="w-[13px] h-[13px] border border-[#888] rounded-[2px] bg-white flex items-center justify-center">
    <span className="w-[5px] h-px bg-[#333]" />
  </span>
);

const RightPanel = () => (
  <div className="w-[280px] shrink-0 flex flex-col bg-white border-x border-[#c4c4c4] relative">
    <Band />
    <div className="h-[22px] shrink-0 bg-[#efefef] border-b border-[#cfcfcf] flex items-center pl-[8px] pt-[2px] text-[#9a9a9a]">显示设置</div>
    <div className="h-[32px] shrink-0 bg-[#efefef] border-b border-[#cfcfcf] flex items-end pl-[3px] gap-[3px]">
      <div className="w-[75px] h-[25px] bg-white border border-b-0 border-[#d0d0d0] rounded-t-[3px] flex items-center justify-center text-[#3f8fe8]">图元显示</div>
      <div className="w-[74px] h-[23px] mb-[1px] bg-[#dedede] rounded-t-[3px] flex items-center justify-center text-[#777]">楼层显示</div>
    </div>
    <div className="mx-[2px] mt-[1px] h-[730px] border border-[#c8c8c8] relative overflow-hidden text-[#222] shrink-0">
      <div className="h-[20px] flex bg-[#efefef] border-b border-[#cfcfcf] text-[#555] w-[259px]">
        <div className="w-[131px] border-r border-[#cfcfcf] flex items-center justify-center">图层构件</div>
        <div className="w-[63px] border-r border-[#cfcfcf] flex items-center justify-center">显示图元</div>
        <div className="w-[63px] border-r border-[#cfcfcf] flex items-center justify-center">显示名称</div>
      </div>
      {RIGHT.map(([lv, t, a, b, last], i) => (
        <div key={i} className="h-[21px] flex border-b border-[#cfcfcf] w-[259px]">
          <div className="w-[131px] border-r border-[#cfcfcf] relative flex items-center whitespace-nowrap">
            {lv > 0 && <span className="absolute left-[7px] top-0 bottom-0 w-px bg-[#dcdcdc]" />}
            {lv === 1 && <span className="absolute left-[7px] top-[10px] w-[5px] h-px bg-[#dcdcdc]" />}
            {lv === 2 && <span className={`absolute left-[18px] top-0 w-px bg-[#dcdcdc] ${last ? "h-[11px]" : "bottom-0"}`} />}
            {lv === 2 && <span className="absolute left-[18px] top-[10px] w-[16px] h-px bg-[#dcdcdc]" />}
            {lv === 0 && <span className="absolute left-[3px]"><Minus /></span>}
            {lv === 1 && <span className="absolute left-[12px]"><Minus /></span>}
            <span className={lv === 0 ? "pl-[21px]" : lv === 1 ? "pl-[31px]" : "pl-[41px]"}>{t}</span>
          </div>
          <div className="w-[63px] border-r border-[#cfcfcf] flex items-center justify-center"><Box k={a} /></div>
          <div className="w-[63px] border-r border-[#cfcfcf] flex items-center justify-center"><Box k={b} /></div>
        </div>
      ))}
      <div className="absolute left-[262px] top-[14px] w-[8px] h-[206px] rounded-full bg-[#c8c8c8]" />
    </div>
    <div className="flex justify-end pr-[7px] pt-[8px]">
      <div className="w-[90px] h-[26px] border border-[#c4c4c4] rounded-[3px] flex items-center justify-center">恢复默认设置</div>
    </div>
  </div>
);

const SBtn = ({ w, cn = "", children }: { w: string; cn?: string; children: React.ReactNode }) => (
  <div className={`${w} h-[25px] border border-[#9a9a9a] bg-[#d8d9db] flex items-center justify-center ${cn}`}>{children}</div>
);

const StatusBar = () => (
  <div className="h-[30px] shrink-0 bg-[#dfe0e2] flex items-center text-[#444] border-t border-[#c8c8c8]">
    <span className="ml-[2px] w-[263px] shrink-0 tracking-[0.6px]">X = 22321 Y = 26105</span>
    <span className="w-[83px] shrink-0">层高： 5</span>
    <span className="w-[133px] shrink-0 tracking-[0.4px]">标高： 7.85~12.85</span>
    <span className="w-[103px] shrink-0">1(44)</span>
    <span className="w-[103px] shrink-0">隐藏：0</span>
    <SBtn w="w-[24px]"><svg width="14" height="14" viewBox="0 0 14 14"><path d="M1.500 0v12.500H14M1.500 7h4v5" stroke="#333" fill="none" /></svg></SBtn>
    <SBtn w="w-[36px] ml-[4px]" cn="!bg-white !border-[#3f8fe8]">
      <svg width="14" height="16" viewBox="0 0 14 16"><rect x="1" y="2" width="12" height="13" fill="none" stroke="#3f8fe8" /><rect x="0" y="0" width="4" height="4" fill="#f5a060" /></svg><Arrow />
    </SBtn>
    <SBtn w="w-[25px] ml-[6px]"><svg width="14" height="14" viewBox="0 0 14 14"><path d="M0 0l14 14M14 0L0 14" stroke="#999" /></svg></SBtn>
    <SBtn w="w-[35px] ml-[6px]"><svg width="16" height="14" viewBox="0 0 16 14"><path d="M0 13h16M0 13L11 3" stroke="#333" /><circle cx="6" cy="8" r="1.500" fill="#333" /></svg><Arrow /></SBtn>
    <SBtn w="w-[35px] ml-[4px]"><svg width="16" height="14" viewBox="0 0 16 14"><path d="M0 4h6M3 1v6" stroke="#333" /><rect x="7" y="9" width="9" height="4" fill="#333" /></svg><Arrow /></SBtn>
    <SBtn w="w-[73px] ml-[4px]">跨图层选择</SBtn>
    <SBtn w="w-[60px] ml-[3px]">折线选择</SBtn>
    <span className="ml-auto mr-[32px] tracking-[0.4px]">1000 FPS</span>
  </div>
);

const Taskbar = () => (
  <div className="h-[9px] border-t-2 border-white flex bg-gradient-to-r from-[#7a94b0] via-[#a8c4e0] via-60% to-[#8294a8] overflow-hidden">
    <div className="w-[141px] flex items-start pl-[16px]"><span className="w-[34px] h-[20px] rounded-full bg-[#2d6ea8] border border-[#aac]" /></div>
    {["#e8c060", "#e040e0", "#8090b0", "#f4f4f4", "#f4f4f4"].map((c, i) => (
      <div key={i} className="w-[66px] mr-[4px] bg-white/70 border-x border-white flex justify-center">
        <span className="w-[18px] h-[8px] rounded-t-[4px]" style={{ background: c }} />
      </div>
    ))}
  </div>
);

export default function App() {
  return (
    <div className="w-[1929px] h-[1041px] overflow-hidden flex flex-col text-[12px] leading-[16px] text-[#222] bg-black font-['Noto_Sans','Noto_Sans_CJK_SC',sans-serif]">
      <div className="h-[1032px] flex">
        <div className="w-[1920px] h-[1032px] flex flex-col bg-[#dfe0e2]">
          <Header />
          <Ribbon />
          <div className="h-[28px] shrink-0 bg-[#c8cace] border-t-2 border-[#a4a6a9] border-b border-b-[#aaa] flex items-center pl-[2px] gap-[3px]">
            <Sel w="w-[99px]" t="二层" />
            <Sel w="w-[99px]" t="墙" />
            <Sel w="w-[98px]" t="砌体墙" />
            <Sel w="w-[99px]" t="QTQ-外250" />
          </div>
          <div className="flex-1 min-h-0 flex">
            <LeftPanel />
            <MidPanel />
            <Splitter w="w-[5px]" />
            <div className="w-[1176px] shrink-0 relative bg-black overflow-hidden">
              <Drawing />
              <Dialog />
              <FloatBar />
            </div>
            <Splitter w="w-[4px]" />
            <RightPanel />
          </div>
          <StatusBar />
        </div>
        <div className="flex-1 flex flex-col">
          <div className="h-[900px] bg-gradient-to-b from-[#0a6ec8] via-[#27bff0] to-[#68e2f6]" />
          <div className="flex-1 bg-black" />
        </div>
      </div>
      <Taskbar />
    </div>
  );
}
